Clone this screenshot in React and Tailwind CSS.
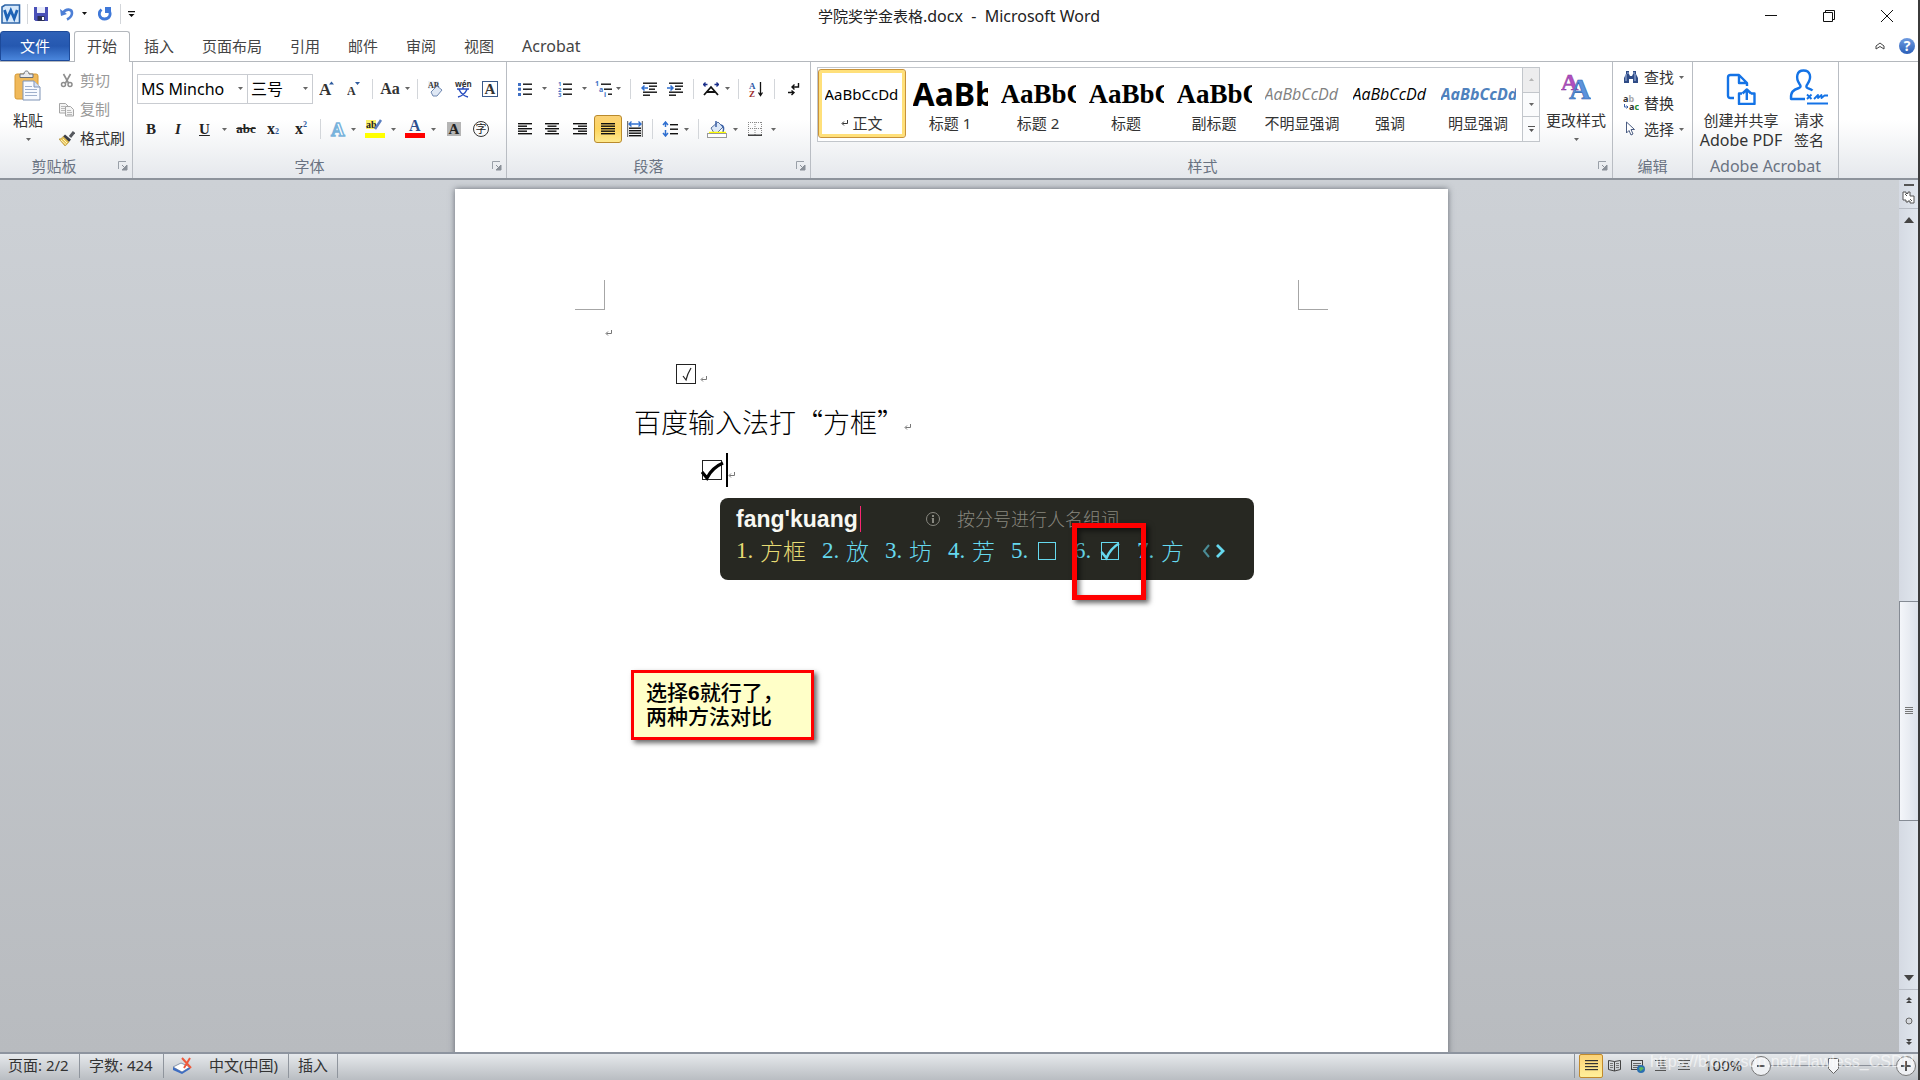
import React, { useState } from 'react';
import clsx from 'clsx';

const UI_FONT = "font-['Noto_Sans','Noto_Sans_CJK_SC',sans-serif]";

const Svg = ({ w = 16, h = 16, className, children }) => (
  <svg
    width={w}
    height={h}
    viewBox={`0 0 ${w} ${h}`}
    fill="none"
    className={clsx('block shrink-0', className)}
    aria-hidden="true"
  >
    {children}
  </svg>
);

const Arrow = () => (
  <Svg w={5} h={3}>
    <path d="M0 0h5L2.500 3z" fill="#666" />
  </Svg>
);

// Horizontal strokes, each given as [x, y, width]
const Lines = ({ rows, color = '#111', h = 1.4 }) =>
  rows.map(([x, y, w], i) => <rect key={i} x={x} y={y} width={w} height={h} fill={color} />);

const Tool = ({ label, className, children }) => (
  <button type="button" aria-label={label} className={clsx('flex h-7 shrink-0 items-center', className)}>
    {children}
  </button>
);

const Divider = ({ className }) => (
  <span className={clsx('flex h-5 shrink-0 justify-center', className)}>
    <span className="w-px bg-[#d3d6da]" />
  </span>
);

const Return = ({ color = '#777' }) => (
  <Svg w={8} h={8}>
    <path d="M6.5 1v3.500h-5M3 2.500l-2 2 2 2" stroke={color} />
  </Svg>
);

/* ---------- icons ---------- */

const WordLogo = () => (
  <Svg w={20} h={20}>
    <path d="M1 3l3-2h14.500v18H1z" fill="#d6e8fa" stroke="#2f66a8" strokeWidth="1.600" />
    <path d="M3.500 6l2.700 8.500 3.600-8 3.400 8L16.200 6" stroke="#1d62b5" strokeWidth="2.800" />
  </Svg>
);

const SaveIcon = () => (
  <Svg w={14} h={14}>
    <path d="M0 0h14v14H1.500L0 12.500z" fill="#4a50b8" />
    <path d="M3 0h8v6H3z" fill="#e9ecfa" />
    <path d="M3.500 9h7v5h-7z" fill="#2b2f55" />
    <path d="M8 10h2v3H8z" fill="#fff" />
  </Svg>
);

const UndoIcon = () => (
  <Svg w={14} h={14}>
    <path d="M3 6c3-5 9-4 9 0 0 3-2 5-5 6.500" stroke="#4d7fd6" strokeWidth="2.600" />
    <path d="M0 2l1 7 6-2z" fill="#4d7fd6" />
  </Svg>
);

const RedoIcon = () => (
  <Svg w={14} h={14}>
    <path d="M3.500 2.500C-.5 6 1.500 12 6.500 12s7-5 4.500-8.500" stroke="#3f78d8" strokeWidth="2.800" />
    <path d="M7 0h6v6H7z" fill="#3f78d8" />
  </Svg>
);

const PasteIcon = () => (
  <Svg w={28} h={32}>
    <rect x="1" y="4" width="23" height="25" rx="2" fill="#f0b95a" stroke="#d79a35" />
    <path d="M6 4h4c0-4 5-4 5 0h4v3.500H6z" fill="#e8eaee" stroke="#6b7078" />
    <path d="M9 11h11l6 6v13H9z" fill="#f7faff" stroke="#7f93b5" />
    <path d="M20 11v6h6" fill="#d6e0f0" stroke="#7f93b5" />
    <Lines color="#9fb0cc" h={1} rows={[[11, 16, 7], [11, 19, 12], [11, 22, 12], [11, 25, 12]]} />
  </Svg>
);

const CutIcon = () => (
  <Svg>
    <path d="M4.500 1l5 9M11.500 1l-5 9" stroke="#8e8e8e" strokeWidth="1.600" />
    <circle cx="4.500" cy="11.500" r="2" stroke="#8e8e8e" strokeWidth="1.500" />
    <circle cx="11" cy="11.500" r="2" stroke="#8e8e8e" strokeWidth="1.500" />
  </Svg>
);

const CopyIcon = () => (
  <Svg>
    <path d="M.5 1.500h6l2.500 2.500v7H.5z" fill="#f4f4f4" stroke="#a5a5a5" />
    <path d="M6.500 4.500h5l3 3v6.500h-8z" fill="#f4f4f4" stroke="#a5a5a5" />
    <Lines color="#b9b9b9" h={1} rows={[[2, 4, 4], [2, 6, 4], [2, 8, 4], [8, 8, 4], [8, 10, 5], [8, 12, 5]]} />
  </Svg>
);

const BrushIcon = () => (
  <Svg>
    <path d="M15 1l-4 5" stroke="#55585e" strokeWidth="3" />
    <path d="M6 3.500l6 5-2 2.500-6-5.500z" fill="#3c3f48" />
    <path d="M4 5.500l6 5.500c-1.500 2-3 3-4 4L0 8c2 0 3-1 4-2.500z" fill="#e6c255" stroke="#a98526" strokeWidth=".6" />
    <path d="M2 9l5 4.500M4 8l4 4" stroke="#fff3bd" />
  </Svg>
);

const BinocularsIcon = () => (
  <Svg>
    <path d="M3 2h3v3l1 2h2l1-2V2h3v3l2 4v5h-5v-4H6v4H1V9l2-4z" fill="#2f4b86" />
    <path d="M3 5v7M12 5v7M5 3v2M11 3v2" stroke="#a9bfe6" />
  </Svg>
);

const ReplaceIcon = () => (
  <Svg>
    <text x="0" y="7" fontSize="9" fontWeight="700" fill="#333">a<tspan fill="#aaa">b</tspan></text>
    <text x="6" y="15" fontSize="9" fontWeight="700" fill="#333">a<tspan fill="#1c8a2e">c</tspan></text>
    <path d="M1.500 9v3H5M3.500 10.500L5 12l-1.500 1.500" stroke="#3a5fa8" />
  </Svg>
);

const CursorIcon = () => (
  <Svg>
    <path d="M3.500 1v11l2.500-2.500 2 4.500 2-1-2-4.500h3.500z" fill="#fff" stroke="#4a5c82" />
  </Svg>
);

const ChangeStylesIcon = () => (
  <Svg w={30} h={30} className="font-['Liberation_Serif',serif]">
    <text x="0" y="19" fontSize="24" fontWeight="700" fill="#b04fc0" stroke="#8e3b9e" strokeWidth=".5">A</text>
    <text x="8" y="28" fontSize="30" fontWeight="700" fill="#5b93dc" stroke="#2d62ab" strokeWidth=".6">A</text>
  </Svg>
);

const SharePdfIcon = () => (
  <Svg w={30} h={32}>
    <g stroke="#1473e6" strokeWidth="2.400" strokeLinejoin="round">
      <path d="M8 25H4.500c-1.500 0-2.500-1-2.500-2.500v-18C2 3 3 2 4.500 2H13l8 8v3M13 2v8h8" />
      <path d="M16 20.500h-3V31h15.500V20.500h-3.500" />
      <path d="M20.800 27v-10M16.500 20.500l4.300-4 4.300 4" />
    </g>
  </Svg>
);

const SignatureIcon = () => (
  <Svg w={40} h={36}>
    <g stroke="#1473e6" strokeWidth="2.400" strokeLinejoin="round">
      <path d="M16 30H2c-.5-7 2-9 8-11 2-1 2-2 .5-4-4-6-3-13.500 4-13.500s8.500 7 4 13.500c-1.500 2-1.500 3 0 4 2 .8 4 1.500 5 2.500" />
      <path d="M18 25.500l4.500 4.500M22.500 25.500L18 30M25 30l4-4v3l3.500-3v3l3-2.500H39" strokeWidth="1.800" />
      <path d="M18 34.500h21" strokeWidth="2" />
    </g>
  </Svg>
);

const Bullets = () => (
  <Svg w={14} h={14}>
    <Lines rows={[[5, 1.5, 9], [5, 6.5, 9], [5, 11.5, 9]]} />
    <path d="M0 1h3v3H0zM0 5.700h3v3H0zM0 11h3v3H0z" fill="#3f6fc4" />
  </Svg>
);

const Numbering = () => (
  <Svg w={14} h={16}>
    <Lines rows={[[5, 2.5, 9], [5, 7.5, 9], [5, 12.5, 9]]} />
    <g fontSize="6" fontWeight="700" fill="#3f6fc4">
      <text x="0" y="5">1</text>
      <text x="0" y="10.500">2</text>
      <text x="0" y="16">3</text>
    </g>
  </Svg>
);

const Multilevel = () => (
  <Svg w={17} h={16}>
    <Lines rows={[[6, 2.5, 10], [9, 7.5, 8], [13, 12.5, 4]]} />
    <g fontSize="7" fontWeight="700" fill="#3f6fc4">
      <text x="0" y="5">1</text>
      <text x="4" y="11">a</text>
      <text x="9" y="16">i</text>
    </g>
  </Svg>
);

const Indent = ({ out }) => (
  <Svg>
    <Lines rows={[[2, 1.5, 14], [8, 4.5, 8], [8, 7.5, 6], [2, 10.5, 14], [2, 13.5, 7]]} />
    <path d={out ? 'M7 7H1M3.500 4.500L1 7l2.500 2.500' : 'M0 7h6M3.500 4.500L6 7 3.500 9.500'} stroke="#2f6fd0" strokeWidth="1.500" />
  </Svg>
);

const ALIGN_ROWS = {
  left: [[0, 0, 14], [0, 2.5, 9], [0, 5, 14], [0, 7.5, 9], [0, 10, 14]],
  center: [[0, 0, 14], [2.5, 2.5, 9], [0, 5, 14], [2.5, 7.5, 9], [0, 10, 14]],
  right: [[0, 0, 14], [5, 2.5, 9], [0, 5, 14], [5, 7.5, 9], [0, 10, 14]],
  justify: [[0, 0, 14], [0, 2.5, 14], [0, 5, 14], [0, 7.5, 14], [0, 10, 14]],
};

const Align = ({ kind }) => (
  <Svg w={14} h={12}>
    <Lines rows={ALIGN_ROWS[kind]} />
  </Svg>
);

const Launcher = ({ label }) => (
  <button type="button" aria-label={label} className="absolute right-1 bottom-2">
    <Svg w={10} h={10}>
      <path d="M.5 8V.5H8" stroke="#9aa0a8" />
      <path d="M4 4l3 3M9 4v5H4z" fill="#8a9098" stroke="#8a9098" />
    </Svg>
  </button>
);

/* ---------- title bar and tabs ---------- */

const TitleBar = () => (
  <header className="relative flex h-[31px] items-center bg-white">
    <div className="flex h-[27px] items-center self-start pl-px">
      <WordLogo />
      <Divider className="w-[13px]" />
      <button type="button" aria-label="保存"><SaveIcon /></button>
      <button type="button" aria-label="撤消" className="ml-3"><UndoIcon /></button>
      <button type="button" aria-label="撤消列表" className="flex w-5 justify-center">
        <Svg w={5} h={3}><path d="M0 0h5L2.500 3z" fill="#111" /></Svg>
      </button>
      <button type="button" aria-label="重复" className="ml-1"><RedoIcon /></button>
      <Divider className="w-4" />
      <button type="button" aria-label="自定义快速访问工具栏">
        <Svg w={7} h={6}><path d="M0 0h7v1.200H0zM.5 3h6l-3 3z" fill="#111" /></Svg>
      </button>
    </div>
    <h1 className="pointer-events-none absolute inset-x-0 text-center text-base text-[#222]">
      <span className="text-[15px]">学院奖学金表格</span>.docx&nbsp; -&nbsp; Microsoft Word
    </h1>
    <div className="mr-[2px] ml-auto flex">
      <button type="button" aria-label="最小化" className="flex h-8 w-[58px] items-center justify-center">
        <Svg w={12} h={12}><path d="M0 5.500h12" stroke="#111" /></Svg>
      </button>
      <button type="button" aria-label="还原" className="flex h-8 w-[58px] items-center justify-center">
        <Svg w={12} h={12}><path d="M.5 2.500h9v9h-9zM2.500 2V.5h9v9H10" stroke="#111" /></Svg>
      </button>
      <button type="button" aria-label="关闭" className="flex h-8 w-[58px] items-center justify-center">
        <Svg w={12} h={12}><path d="M0 0l12 12M12 0L0 12" stroke="#111" /></Svg>
      </button>
    </div>
  </header>
);

const TABS = ['开始', '插入', '页面布局', '引用', '邮件', '审阅', '视图', 'Acrobat'];

const TabBar = ({ active, onSelect }) => (
  <nav className="flex h-[31px] items-end border-b border-[#b4b8bd] bg-white text-[15px]">
    <button
      type="button"
      className="h-[30px] w-[70px] rounded-t-[3px] border border-[#1d4a9a] bg-linear-to-b from-[#2f62b8] via-[#2558b0] to-[#4a86dc] text-white"
    >
      文件
    </button>
    <div className="ml-1 flex h-full items-end">
      {TABS.map((tab) => (
        <button
          key={tab}
          type="button"
          onClick={() => onSelect(tab)}
          className={clsx(
            'text-[#444]',
            tab === active
              ? '-mb-px h-[31px] rounded-t-[3px] border border-b-0 border-[#b4b8bd] bg-white px-3 pb-[2px]'
              : 'h-[30px] px-[14px]',
            tab === 'Acrobat' && 'text-base'
          )}
        >
          {tab}
        </button>
      ))}
    </div>
    <div className="mr-[3px] ml-auto flex h-full items-center gap-[14px]">
      <button type="button" aria-label="功能区最小化">
        <Svg w={10} h={8}><path d="M1 4l4-3 4 3v3L5 4.500 1 7z" stroke="#444" /></Svg>
      </button>
      <button
        type="button"
        aria-label="帮助"
        className="h-4 w-4 rounded-full bg-linear-to-b from-[#6f9be0] to-[#2b5fb8] text-sm leading-4 font-bold text-white"
      >
        ?
      </button>
    </div>
  </nav>
);

/* ---------- ribbon groups ---------- */

const Group = ({ name, launcher, className, children }) => (
  <section className={clsx('relative flex h-[117px] shrink-0 flex-col border-r border-[#b9bdc3]', className)}>
    <div className="flex-1">{children}</div>
    <h2 className={clsx('h-[23px] text-center text-[15px] leading-5 text-[#6a7382]', launcher && 'pr-6')}>{name}</h2>
    {launcher && <Launcher label={name} />}
  </section>
);

const ClipboardGroup = () => (
  <Group name="剪贴板" launcher className="w-[133px]">
    <div className="flex">
      <button type="button" className="flex w-14 flex-col items-center pt-2 text-[15px] text-[#333]">
        <PasteIcon />
        <span className="mt-2 leading-5">粘贴</span>
        <span className="mt-2"><Arrow /></span>
      </button>
      <div className="flex flex-col pt-1 text-[15px]">
        <button type="button" disabled className="flex h-[29px] items-center gap-[5px] pl-[3px] text-[#9a9a9a]">
          <CutIcon />剪切
        </button>
        <button type="button" disabled className="flex h-[29px] items-center gap-[5px] pl-[3px] text-[#9a9a9a]">
          <CopyIcon />复制
        </button>
        <button type="button" className="flex h-[29px] items-center gap-[5px] pl-[3px] text-[#333]">
          <BrushIcon />格式刷
        </button>
      </div>
    </div>
  </Group>
);

const Combo = ({ label, value, className }) => (
  <span className={clsx('flex h-[30px] items-center border border-[#c9ccd1] bg-white', className)}>
    <input aria-label={label} defaultValue={value} className="w-full min-w-0 flex-1 pl-[3px] text-base text-black outline-none" />
    <button type="button" aria-label={label} className="flex w-[14px] shrink-0 justify-center"><Arrow /></button>
  </span>
);

const FontGroup = () => (
  <Group name="字体" launcher className="w-[374px] pl-1">
    <div className="flex h-[53px] items-center font-['Liberation_Serif',serif] font-bold text-[#333]">
      <div className={clsx('flex font-normal', UI_FONT)}>
        <Combo label="字体" value="MS Mincho" className="w-[111px]" />
        <Combo label="字号" value="三号" className="-ml-px w-[66px]" />
      </div>
      <Tool label="增大字体" className="w-7 justify-center">
        <Svg w={16} h={18}>
          <text x="0" y="15" fontSize="17" fill="#333">A</text>
          <path d="M10 4.500l2.500-3 2.500 3z" fill="#2c5a9e" />
        </Svg>
      </Tool>
      <Tool label="缩小字体" className="w-[26px] justify-center">
        <Svg w={14} h={18}>
          <text x="0" y="15" fontSize="12" fill="#333">A</text>
          <path d="M8 2l2.500 3L13 2z" fill="#2c5a9e" />
        </Svg>
      </Tool>
      <Divider className="w-[10px]" />
      <Tool label="更改大小写" className="w-9 justify-center gap-[5px] text-base">Aa<Arrow /></Tool>
      <Divider className="w-2" />
      <Tool label="清除格式" className="w-7 justify-center">
        <Svg w={18} h={18}>
          <rect x="2" y="1" width="11" height="8" fill="#eef2f8" />
          <text x="2" y="7.500" fontSize="8" fill="#333">AB</text>
          <path d="M5 12l6-6 5 4-5 6H7z" fill="#dfe8f5" stroke="#6f88b0" />
        </Svg>
      </Tool>
      <Tool label="拼音指南" className="w-7 justify-center">
        <Svg w={18} h={18} className={UI_FONT}>
          <text x="1" y="7" fontSize="8" fontWeight="700" fill="#333">wén</text>
          <path d="M3 9h12M9 7v2M5 9.500c2 4 5 6.500 9 7.500M13 9.500c-2 4-5 6.500-9 7.500" stroke="#2b4fc0" strokeWidth="1.500" />
        </Svg>
      </Tool>
      <Tool label="字符边框" className="w-[26px] justify-center">
        <span className="h-4 w-4 border border-[#3a5a8a] text-center text-[15px] leading-[15px]">A</span>
      </Tool>
    </div>
    <div className="flex h-7 items-center font-['Liberation_Serif',serif] font-bold text-[#222]">
      <Tool label="加粗" className="w-7 justify-center text-[15px]">B</Tool>
      <Tool label="倾斜" className="w-[26px] justify-center text-[15px] italic">I</Tool>
      <Tool label="下划线" className="w-[42px] gap-3 pl-2 text-[15px]">
        <span className="underline">U</span><Arrow />
      </Tool>
      <Tool label="删除线" className="w-[26px] justify-center text-[13px]"><span className="line-through">abc</span></Tool>
      <Tool label="下标" className="w-7 items-end justify-center pb-[6px] leading-4">
        x<span className="text-[8px] leading-[10px] text-[#2c5a9e]">2</span>
      </Tool>
      <Tool label="上标" className="w-7 justify-center leading-4">
        x<span className="mb-2 text-[8px] leading-[10px] text-[#2c5a9e]">2</span>
      </Tool>
      <Divider className="w-[10px]" />
      <Tool label="文本效果" className="w-8 justify-center gap-[5px] pl-1">
        <Svg w={16} h={16}>
          <text x="1" y="15" fontSize="19" fill="#fff" stroke="#79b3dc" strokeWidth="1.500">A</text>
        </Svg>
        <Arrow />
      </Tool>
      <Tool label="突出显示" className="w-10 justify-center gap-[6px] pl-[6px]">
        <Svg w={20} h={20}>
          <rect x="1" y="1" width="10" height="9" fill="#fbf36a" />
          <text x="1" y="9" fontSize="10" fill="#222">ab</text>
          <path d="M16 1l-6 9" stroke="#5a7fc0" strokeWidth="2.500" />
          <rect y="14" width="20" height="5" fill="#ff0" />
        </Svg>
        <Arrow />
      </Tool>
      <Tool label="字体颜色" className="w-10 justify-center gap-[6px] pl-[6px]">
        <Svg w={20} h={20}>
          <text x="4" y="12" fontSize="16" fill="#2c4f8f">A</text>
          <rect y="14" width="20" height="5" fill="red" />
        </Svg>
        <Arrow />
      </Tool>
      <Tool label="字符底纹" className="w-[30px] justify-center pl-1">
        <span className="h-[14px] w-[14px] bg-[#b5b5b5] text-[15px] leading-[14px]">A</span>
      </Tool>
      <Tool label="带圈字符" className={clsx('w-7 justify-center font-normal', UI_FONT)}>
        <span className="h-4 w-4 rounded-full border border-[#333] text-[11px] leading-[14px]">字</span>
      </Tool>
    </div>
  </Group>
);

const ParagraphGroup = () => (
  <Group name="段落" launcher className="w-[304px] pl-1">
    <div className="flex h-[53px] items-center pl-[2px]">
      <Tool label="项目符号" className="w-[39px] justify-center gap-[10px]"><Bullets /><Arrow /></Tool>
      <Tool label="编号" className="w-10 justify-center gap-[10px]"><Numbering /><Arrow /></Tool>
      <Tool label="多级列表" className="w-8 justify-center gap-1"><Multilevel /><Arrow /></Tool>
      <Divider className="w-3" />
      <Tool label="减少缩进量" className="w-[26px] justify-center"><Indent out /></Tool>
      <Tool label="增加缩进量" className="w-[26px] justify-center"><Indent /></Tool>
      <Divider className="w-[10px]" />
      <Tool label="中文版式" className="w-9 justify-center gap-[6px]">
        <Svg w={16} h={14}>
          <path d="M1 13l7-8 7 8M4 10h8" stroke="#111" strokeWidth="1.800" />
          <path d="M4.500 2.500h-4M2.500.5l-2 2 2 2M11.500 2.500h4M13.500.5l2 2-2 2" stroke="#1b2f8a" strokeWidth="1.300" />
        </Svg>
        <Arrow />
      </Tool>
      <Divider className="w-2" />
      <Tool label="排序" className="w-7 justify-center">
        <Svg>
          <g fontSize="9" fontWeight="700" className="font-['Liberation_Serif',serif]">
            <text x="1" y="7.500" fill="#2f5aa8">A</text>
            <text x="1" y="15.500" fill="#9b2d2d">Z</text>
          </g>
          <path d="M12.500 1v13M10.500 11.500l2 3 2-3" stroke="#111" strokeWidth="1.300" />
        </Svg>
      </Tool>
      <Divider className="w-2" />
      <Tool label="显示编辑标记" className="w-8 justify-center">
        <Svg w={12} h={14}>
          <path d="M10.500 1v4H4M6.500 2.500L4 5l2.500 2.500M0 10.500h6M3.500 8.500l2.500 2-2.500 2.500" stroke="#111" strokeWidth="1.400" />
        </Svg>
      </Tool>
    </div>
    <div className="flex h-7 items-center">
      <Tool label="文本左对齐" className="w-[27px] justify-center"><Align kind="left" /></Tool>
      <Tool label="居中" className="w-7 justify-center"><Align kind="center" /></Tool>
      <Tool label="文本右对齐" className="w-7 justify-center"><Align kind="right" /></Tool>
      <Tool label="两端对齐" className="w-7 justify-center rounded-[3px] border border-[#b98a2c] bg-linear-to-b from-[#fbd277] via-[#fdd55f] to-[#fee98c]">
        <Align kind="justify" />
      </Tool>
      <Tool label="分散对齐" className="w-[26px] justify-center">
        <Svg>
          <path d="M.7 0v16M15.300 0v16" stroke="#555" />
          <path d="M2 3h12M4.500.5L2 3l2.500 2.500M11.500.5L14 3l-2.500 2.500" stroke="#2f6fd0" strokeWidth="1.400" />
          <Lines rows={[[2, 6.5, 12], [2, 9, 12], [2, 11.5, 12], [2, 14, 12]]} />
        </Svg>
      </Tool>
      <Divider className="w-2" />
      <Tool label="行距" className="w-[38px] justify-center gap-[6px]">
        <Svg>
          <path d="M3.500 1v5M1 4l2.500-3L6 4M3.500 9v6M1 12l2.500 3L6 12" stroke="#2f6fd0" strokeWidth="1.500" />
          <Lines rows={[[8, 3, 8], [8, 7.5, 8], [8, 12, 8]]} />
        </Svg>
        <Arrow />
      </Tool>
      <Divider className="w-2" />
      <Tool label="底纹" className="w-10 justify-center gap-[6px]">
        <Svg w={20} h={18}>
          <path d="M4 8l7-6 5 5-6 6H7z" fill="#dbe7f7" stroke="#56719f" />
          <path d="M9 1v6M14 5c3 1 3 4 2 7" stroke="#3c62a8" strokeWidth="1.500" />
          <path d="M2 12.500h17" stroke="#ff0" strokeWidth="1.500" />
          <rect x=".5" y="13.500" width="19" height="4" fill="#fff" stroke="#999" />
        </Svg>
        <Arrow />
      </Tool>
      <Tool label="边框" className="w-10 justify-center gap-[9px]">
        <Svg w={14} h={14}>
          <path d="M.5 0v13M13.500 0v13M7 0v13M0 .5h14M0 6.500h14" stroke="#888" strokeDasharray="1 1" />
          <path d="M0 13.200h14" stroke="#222" strokeWidth="1.300" />
        </Svg>
        <Arrow />
      </Tool>
    </div>
  </Group>
);

const STYLES = [
  { name: '正文', sample: 'AaBbCcDd', cls: 'text-[15px] text-black' },
  { name: '标题 1', sample: 'AaBb', cls: 'text-[32px] font-bold text-black' },
  { name: '标题 2', sample: 'AaBbC', cls: "font-['Liberation_Serif',serif] text-[27px] font-bold text-black" },
  { name: '标题', sample: 'AaBbC', cls: "font-['Liberation_Serif',serif] text-[27px] font-bold text-black" },
  { name: '副标题', sample: 'AaBbC', cls: "font-['Liberation_Serif',serif] text-[27px] font-bold text-black" },
  { name: '不明显强调', sample: 'AaBbCcDd', cls: "font-['Open_Sans',sans-serif] text-base leading-8 italic text-[#808080]" },
  { name: '强调', sample: 'AaBbCcDd', cls: "font-['Open_Sans',sans-serif] text-base leading-8 italic text-black" },
  { name: '明显强调', sample: 'AaBbCcDd', cls: "font-['Open_Sans',sans-serif] text-base leading-8 font-bold italic text-[#4f81bd]" },
];

const StylesGroup = () => {
  const [current, setCurrent] = useState('正文');
  return (
    <Group name="样式" launcher className="w-[802px] pl-[6px]">
      <div className="flex pt-[5px]">
        <div className="flex h-[75px] border border-[#c2c6cb] bg-white pt-px">
          {STYLES.map((style) => (
            <button
              key={style.name}
              type="button"
              onClick={() => setCurrent(style.name)}
              className={clsx(
                'flex h-[69px] w-[88px] flex-col items-center rounded-[3px] border',
                style.name === current ? 'border-[#c8923a] ring-[3px] ring-[#ffe07a] ring-inset' : 'border-transparent'
              )}
            >
              <span className={clsx('mt-2 flex h-8 w-[75px] items-center overflow-hidden leading-8', style.cls)}>
                {style.sample}
              </span>
              <span className="mt-[3px] flex items-center gap-[3px] text-[15px] leading-5 whitespace-nowrap text-[#333]">
                {style.name === '正文' && <Return color="#333" />}
                {style.name}
              </span>
            </button>
          ))}
        </div>
        <div className="-ml-px flex h-[75px] w-[18px] flex-col divide-y divide-[#c2c6cb] border border-[#c2c6cb] bg-[#fafbfc]">
          <button type="button" aria-label="上一行" className="flex flex-1 items-center justify-center bg-[#ededee]">
            <Svg w={5} h={3}><path d="M0 3h5L2.500 0z" fill="#b5b5b5" /></Svg>
          </button>
          <button type="button" aria-label="下一行" className="flex flex-1 items-center justify-center"><Arrow /></button>
          <button type="button" aria-label="其他" className="flex flex-1 items-center justify-center">
            <Svg w={7} h={6}><path d="M0 0h7v1H0zM1 3h5L3.500 6z" fill="#555" /></Svg>
          </button>
        </div>
        <button type="button" className="flex flex-1 flex-col items-center pt-1 text-[15px] text-[#333]">
          <ChangeStylesIcon />
          <span className="mt-[9px] leading-5 whitespace-nowrap">更改样式</span>
          <span className="mt-2"><Arrow /></span>
        </button>
      </div>
    </Group>
  );
};

const EditingGroup = () => (
  <Group name="编辑" className="w-20">
    <div className="flex flex-col pt-[2px] text-[15px] text-[#333]">
      <button type="button" className="flex h-[26px] items-center gap-[5px] pl-[10px]">
        <BinocularsIcon />查找<Arrow />
      </button>
      <button type="button" className="flex h-[26px] items-center gap-[5px] pl-[10px]">
        <ReplaceIcon />替换
      </button>
      <button type="button" className="flex h-[26px] items-center gap-[5px] pl-[10px]">
        <CursorIcon />选择<Arrow />
      </button>
    </div>
  </Group>
);

const AcrobatGroup = () => (
  <Group name={<span className="text-base leading-5">Adobe Acrobat</span>} className="w-[146px]">
    <div className="flex pt-[7px] pl-[6px] text-[15px] leading-5 text-[#333]">
      <button type="button" className="flex w-[84px] flex-col items-center pt-1">
        <SharePdfIcon />
        <span className="mt-[5px] whitespace-nowrap">创建并共享</span>
        <span className="text-base leading-5 whitespace-nowrap">Adobe PDF</span>
      </button>
      <button type="button" className="flex w-[52px] flex-col items-center">
        <SignatureIcon />
        <span className="mt-[5px]">请求</span>
        <span>签名</span>
      </button>
    </div>
  </Group>
);

const Ribbon = () => (
  <div className="flex h-[118px] shrink-0 overflow-hidden border-b-2 border-[#8d939b] bg-linear-to-b from-white from-50% to-[#e5e8ec]">
    <ClipboardGroup />
    <FontGroup />
    <ParagraphGroup />
    <StylesGroup />
    <EditingGroup />
    <AcrobatGroup />
  </div>
);

/* ---------- document ---------- */

const CANDIDATES = ['方框', '放', '坊', '芳', 'box', 'checked', '方'];

const CandidateGlyph = ({ value }) => {
  if (value !== 'box' && value !== 'checked') return value;
  return (
    <Svg w={20} h={20} className="mx-[2px]">
      <rect x="1.500" y="1.500" width="17" height="17" stroke="#66d9ef" />
      {value === 'checked' && <path d="M1.500 11L6.500 17C9 11 13 6 19 2.500" stroke="#66d9ef" strokeWidth="2.600" />}
    </Svg>
  );
};

const ImePopup = () => (
  <div className="absolute top-[309px] left-[265px] flex h-[82px] w-[534px] flex-col rounded-lg bg-[#272822] px-4 pt-1">
    <div className="flex h-[34px] items-center">
      <span className="w-[122px] font-['Liberation_Sans',sans-serif] text-[23px] font-bold text-[#f8f8f2]">fang'kuang</span>
      <span className="ml-[2px] h-[26px] w-px bg-[#f92672]" />
      <span className="ml-16 flex items-center gap-4 text-lg font-light whitespace-nowrap text-[#87877f]">
        <Svg>
          <circle cx="8" cy="8" r="6.500" stroke="#87877f" />
          <path d="M7 4h2v2H7zM6.500 7H9v5H7V8z" fill="#87877f" />
        </Svg>
        按分号进行人名组词
      </span>
    </div>
    <ol className="flex h-[30px] items-center text-[23px] leading-[30px] font-light text-[#66d9ef]">
      {CANDIDATES.map((item, i) => (
        <li key={i} className={clsx('flex shrink-0 items-center', i === 0 ? 'w-[86px] text-[#e6db74]' : 'w-[63px]')}>
          <span className="w-6 shrink-0 font-['Liberation_Serif',serif] font-normal">{i + 1}.</span>
          <span className="flex whitespace-nowrap"><CandidateGlyph value={item} /></span>
        </li>
      ))}
      <li className="flex items-center gap-[6px]">
        <button type="button" aria-label="上一页" className="pl-[2px]">
          <Svg w={8} h={14}><path d="M7 1L2 7l5 6" stroke="#4a8c96" strokeWidth="2" /></Svg>
        </button>
        <button type="button" aria-label="下一页">
          <Svg w={9} h={14}><path d="M1 1l6 6-6 6" stroke="#66d9ef" strokeWidth="2.800" /></Svg>
        </button>
      </li>
    </ol>
  </div>
);

const DocumentPage = () => (
  <article className="relative mx-auto mt-[9px] min-h-[900px] w-[993px] shrink-0 bg-white px-[120px] pt-[91px] shadow-[0_0_6px_rgba(60,65,75,0.7)]">
    <div className="flex justify-between">
      <span className="h-[30px] w-[30px] border-r border-b border-[#a6a6a6]" />
      <span className="h-[30px] w-[30px] border-b border-l border-[#a6a6a6]" />
    </div>
    <div className="pl-[30px] font-['Noto_Sans_CJK_SC',sans-serif] text-black">
      <p className="flex h-[46px] items-center"><Return /></p>
      <p className="flex h-9 items-center pl-[71px]">
        <Svg w={20} h={20}>
          <rect x=".5" y=".5" width="19" height="19" stroke="#222" />
          <path d="M7 12l3 4c1-4 2.500-8 5-12" stroke="#222" strokeWidth="1.200" />
        </Svg>
        <span className="mt-[10px] ml-1"><Return /></span>
      </p>
      <p className="flex h-[60px] items-center pl-[29px] text-[27px] font-light">
        百度输入法打“方框”
        <span className="mt-[10px]"><Return /></span>
      </p>
      <p className="flex h-9 items-center pl-[96px]">
        <Svg w={23} h={21}>
          <rect x="1.500" y=".5" width="19" height="19" stroke="#222" />
          <path d="M1 12l5 6C9 12 15 6 22 3" stroke="#000" strokeWidth="3.200" />
        </Svg>
        <span className="ml-[2px] h-[34px] w-[2px] bg-black" />
        <span className="mt-[10px]"><Return /></span>
      </p>
    </div>
    <ImePopup />
    <div className="absolute top-[334px] left-[617px] h-[77px] w-[74px] border-[5px] border-[red] shadow-[3px_3px_5px_rgba(0,0,0,0.6),inset_3px_3px_5px_rgba(0,0,0,0.5)]" />
    <p className="absolute top-[481px] left-[176px] h-[70px] w-[183px] border-[3px] border-[red] bg-[#ffffc8] pt-2 pl-3 font-['Liberation_Sans','Noto_Sans_CJK_SC',sans-serif] text-[21px] leading-6 font-medium text-black shadow-[3px_3px_5px_rgba(0,0,0,0.6)]">
      选择<b>6</b>就行了，
      <br />
      两种方法对比
    </p>
  </article>
);

const ScrollBar = () => (
  <aside className="flex w-[19px] shrink-0 flex-col items-center bg-linear-to-r from-[#d5dae3] to-[#e0e6ee]">
    <span className="mt-1 h-[2px] w-[10px] bg-[#555]" />
    <button type="button" aria-label="标尺" className="mt-[5px] pb-1">
      <Svg w={13} h={13}>
        <path d="M1 1h3v1.500h2V1h2v4h4v7H8v-2H6v1H4V9H1z" fill="#fff" stroke="#555" />
        <path d="M3 3l2 2M8 8l2 2" stroke="#555" />
      </Svg>
    </button>
    <span className="h-px w-full bg-[#b8bdc6]" />
    <button type="button" aria-label="向上滚动" className="mt-2">
      <Svg w={10} h={6}><path d="M0 6h10L5 0z" fill="#444" /></Svg>
    </button>
    <div className="flex w-full flex-1 flex-col">
      <span className="grow-[376]" />
      <span className="flex grow-[210] flex-col items-center justify-center border border-r-0 border-[#858b94] bg-linear-to-r from-[#f4f6fa] to-[#dde2ea]">
        <Svg w={8} h={8}>
          <Lines color="#777" h={1} rows={[[0, 0, 8], [0, 2, 8], [0, 4, 8], [0, 6, 8]]} />
        </Svg>
      </span>
      <span className="grow-[153]" />
    </div>
    <button type="button" aria-label="向下滚动" className="mb-2">
      <Svg w={10} h={6}><path d="M0 0h10L5 6z" fill="#444" /></Svg>
    </button>
    <span className="h-px w-full bg-[#b8bdc6]" />
    <div className="flex h-[62px] flex-col items-center justify-between py-[7px]">
      <Svg w={6} h={7}><path d="M0 3h6L3 0zM0 6h6L3 3z" fill="#444" /></Svg>
      <Svg w={8} h={8}><circle cx="4" cy="4" r="3" fill="#d5d8dd" stroke="#666" /></Svg>
      <Svg w={6} h={7}><path d="M0 1h6L3 4zM0 4h6L3 7z" fill="#444" /></Svg>
    </div>
  </aside>
);

/* ---------- status bar ---------- */

const StatusDivider = () => <span className="h-6 w-px bg-[#8f959d]" />;

const VIEWS = [
  { label: '页面视图', icon: <Lines color="#333" h={1.2} rows={[[1, 2, 13], [1, 5, 13], [1, 8, 13], [1, 11, 13]]} /> },
  {
    label: '阅读版式视图',
    icon: (
      <>
        <path d="M1.500 2.500l6 1 6-1v9l-6 1.500-6-1.500zM7.500 3.500V13" stroke="#444" />
        <Lines color="#777" h={1} rows={[[3, 5, 3], [3, 7, 3], [3, 9, 3], [9, 5, 3], [9, 7, 3], [9, 9, 3]]} />
      </>
    ),
  },
  {
    label: 'Web 版式视图',
    icon: (
      <>
        <rect x="1.500" y="2.500" width="11" height="9" stroke="#444" />
        <Lines color="#666" h={1} rows={[[3, 5, 8], [3, 7, 8], [3, 9, 5]]} />
        <circle cx="11" cy="11" r="4" fill="#2a6fb0" />
        <path d="M9 10c2-2 4-1 5 1-2 0-2 2-4 2z" fill="#5cb85c" />
      </>
    ),
  },
  { label: '大纲视图', icon: <Lines color="#555" h={1} rows={[[2, 2, 11], [5, 4.5, 8], [5, 7, 8], [7, 9.5, 6], [2, 12, 11]]} /> },
  { label: '草稿', icon: <Lines color="#555" h={1} rows={[[2, 2, 12], [4, 5, 8], [2, 8, 12], [2, 11, 12]]} /> },
];

const StatusBar = () => (
  <footer className="relative flex h-7 shrink-0 items-center border-t-2 border-t-[#8d949f] bg-linear-to-b from-[#e6e9ec] to-[#b9bdc2] pb-[3px] text-[15px] text-[#333]">
    <span className="w-[79px] pl-2 whitespace-nowrap">页面: 2/2</span>
    <StatusDivider />
    <span className="w-[83px] pl-[9px] whitespace-nowrap">字数: 424</span>
    <StatusDivider />
    <button type="button" aria-label="校对" className="pr-4 pl-2">
      <Svg w={21} h={18}>
        <path d="M1 10l8-4 9 4-8 5z" fill="#fff" stroke="#8a96ab" />
        <path d="M1 10v3l9 4 8-5v-2l-8 5z" fill="#3d6dc2" />
        <path d="M10 1l9 10M18 1l-6 10" stroke="#ee5a3c" strokeWidth="2" />
      </Svg>
    </button>
    <span className="w-[79px] whitespace-nowrap">中文(中国)</span>
    <StatusDivider />
    <span className="w-12 pl-[9px]">插入</span>
    <StatusDivider />
    <div className="ml-auto flex items-center">
      <StatusDivider />
      <div className="flex items-center pl-1">
        {VIEWS.map((view, i) => (
          <button
            key={view.label}
            type="button"
            aria-label={view.label}
            className={clsx(
              'flex h-6 items-center justify-center',
              i === 0 ? 'w-6 rounded-[2px] border border-[#c28a2b] bg-linear-to-b from-[#fbd277] to-[#fff09a]' : 'w-[23px]'
            )}
          >
            <Svg w={15} h={15}>{view.icon}</Svg>
          </button>
        ))}
      </div>
      <span className="ml-2 w-12 pl-px">100%</span>
      <button type="button" aria-label="缩小" className="flex h-5 w-5 items-center justify-center rounded-full border border-[#777] bg-[#eef0f3]">
        <Svg w={8} h={2}><path d="M0 1h8" stroke="#555" strokeWidth="2" /></Svg>
      </button>
      <span className="relative flex h-5 w-[125px] items-center">
        <span className="h-px w-full bg-[#8b9099]" />
        <span className="absolute left-[57px]">
          <Svg w={11} h={16}><path d="M.5.5h10v10l-5 5-5-5z" fill="#f4f5f7" stroke="#666" /></Svg>
        </span>
      </span>
      <button type="button" aria-label="放大" className="mr-[2px] flex h-5 w-5 items-center justify-center rounded-full border border-[#777] bg-[#eef0f3]">
        <Svg w={10} h={10}><path d="M0 5h10M5 0v10" stroke="#555" strokeWidth="2" /></Svg>
      </button>
    </div>
    <span className="pointer-events-none absolute -top-[2px] right-1 font-['Liberation_Sans',sans-serif] text-base leading-5 text-white/60">
      https://blog.csdn.net/Flawless_CSDN
    </span>
  </footer>
);

const App = () => {
  const [tab, setTab] = useState('开始');

  return (
    <div className={clsx('flex h-screen flex-col overflow-hidden border-r-2 border-[#3b3b3b] bg-white', UI_FONT)}>
      <TitleBar />
      <TabBar active={tab} onSelect={setTab} />
      <Ribbon />
      <main className="flex min-h-0 flex-1 bg-linear-to-b from-[#cdd1d6] to-[#b8bbbf]">
        <div className="flex min-w-0 flex-1 flex-col overflow-hidden pl-1">
          <DocumentPage />
        </div>
        <ScrollBar />
      </main>
      <StatusBar />
    </div>
  );
};

export default App;
